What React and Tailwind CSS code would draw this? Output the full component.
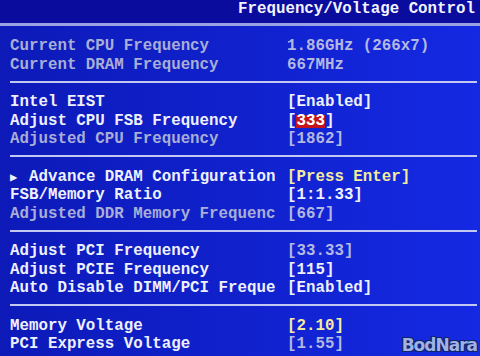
import React from 'react';

const groups = [
  [
    { label: 'Current CPU Frequency', value: '1.86GHz (266x7)', dim: true, valueDim: true },
    { label: 'Current DRAM Frequency', value: '667MHz', dim: true, valueDim: true },
  ],
  [
    { label: 'Intel EIST', value: '[Enabled]' },
    { label: 'Adjust CPU FSB Frequency', value: 'fsb' },
    { label: 'Adjusted CPU Frequency', value: '[1862]', dim: true, valueDim: true },
  ],
  [
    { label: 'Advance DRAM Configuration', value: '[Press Enter]', sub: true, yellow: true },
    { label: 'FSB/Memory Ratio', value: '[1:1.33]' },
    { label: 'Adjusted DDR Memory Frequenc', value: '[667]', dim: true, valueDim: true },
  ],
  [
    { label: 'Adjust PCI Frequency', value: '[33.33]', valueDim: true },
    { label: 'Adjust PCIE Frequency', value: '[115]' },
    { label: 'Auto Disable DIMM/PCI Freque', value: '[Enabled]' },
  ],
  [
    { label: 'Memory Voltage', value: '[2.10]', yellow: true },
    { label: 'PCI Express Voltage', value: '[1.55]', valueDim: true },
  ],
];

const Row = ({ row }) => {
  const labelColor = row.dim ? 'text-[#a9aed6]' : 'text-[#eef0ff]';
  const valueColor = row.yellow ? 'text-[#f4eb9c]' : row.valueDim ? 'text-[#b3b8e2]' : 'text-[#eef0ff]';
  return (
    <div className="flex h-[18.5px] leading-[18.5px] whitespace-pre">
      <div className={`w-[277px] shrink-0 ${labelColor}`}>
        {row.sub && <span className="inline-block w-[19px] text-[12px]">{'\u25B6'}</span>}
        {row.label}
      </div>
      <div className={valueColor}>
        {row.value === 'fsb' ? (
          <>
            [<span className="inline-block bg-[#c3141e] leading-[13px] text-white">333</span>]
          </>
        ) : (
          row.value
        )}
      </div>
    </div>
  );
};

export default function App() {
  return (
    <div
      className="relative h-[356px] w-[480px] overflow-hidden bg-linear-to-r from-[#0d1ab8] to-[#1429e2] text-[15.8px] font-bold"
      style={{ fontFamily: '"Liberation Mono", "DejaVu Sans Mono", monospace' }}
    >
      <div className="flex h-[23px] justify-end bg-[#0a0c9e] pr-[5px] leading-[18.5px] text-[#f2f3ff]">
        Frequency/Voltage Control
      </div>
      <div className="h-[3px] bg-[#9aa2e4]" />

      <div className="pl-[10px] pr-[3px] pt-[11px]">
        {groups.map((group, gi) => (
          <div key={gi}>
            {group.map((row) => (
              <Row key={row.label} row={row} />
            ))}
            {gi < groups.length - 1 && (
              <div className="mb-[10.5px] mt-[6.5px] h-[2px] bg-[#c2c8f2]" />
            )}
          </div>
        ))}
      </div>

      <div
        className="absolute bottom-[1px] right-[3px] text-[17px] font-bold leading-[20px] tracking-[-1px] text-[#9eb2e8]"
        style={{
          fontFamily: '"DejaVu Sans", sans-serif',
          textShadow:
            '1px 0 0 #10246a, -1px 0 0 #10246a, 0 1px 0 #10246a, 0 -1px 0 #10246a, 1px 1px 0 #10246a, -1px -1px 0 #10246a, 1px -1px 0 #10246a, -1px 1px 0 #10246a',
        }}
      >
        BodNara
      </div>
    </div>
  );
}
